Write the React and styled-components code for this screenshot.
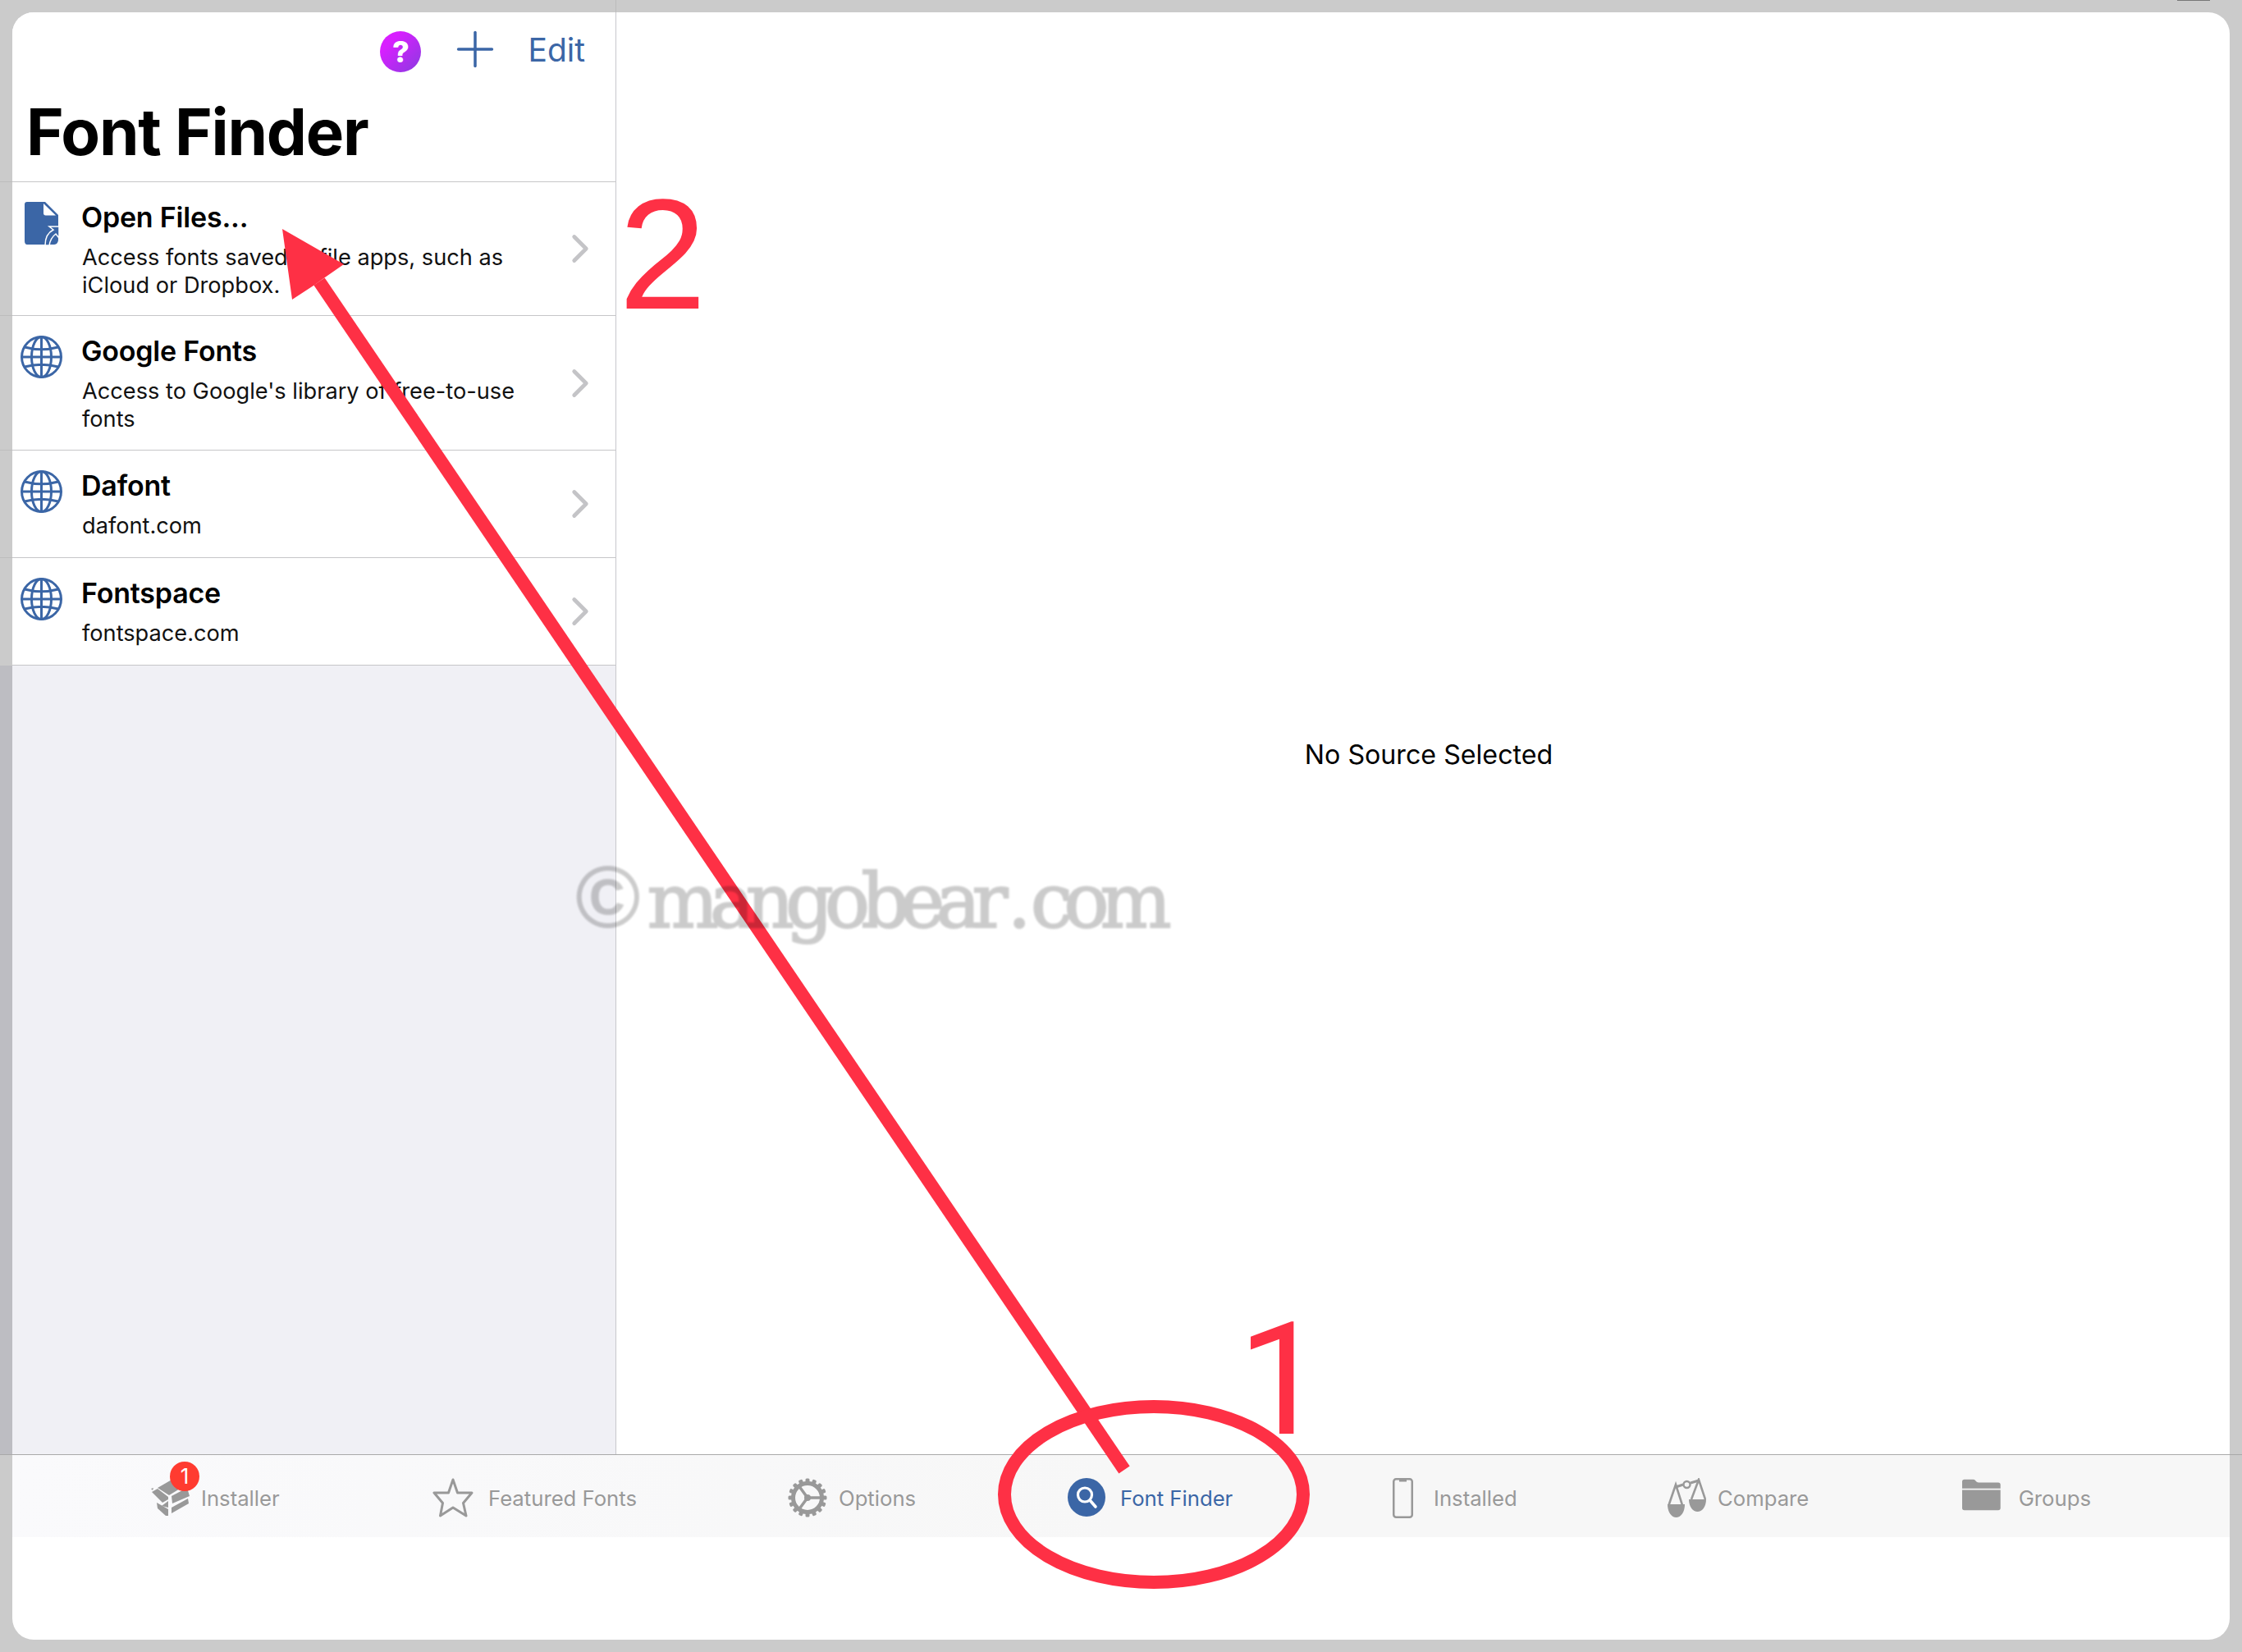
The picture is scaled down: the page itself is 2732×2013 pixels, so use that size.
import React from 'react';
import styled, { createGlobalStyle } from 'styled-components';
import { LuPlus, LuChevronRight } from 'react-icons/lu';

const BLUE = '#3b66a6';
const GREY = '#999999';
const RED = '#fe3045';

const GlobalStyle = createGlobalStyle`
    html, body {
        margin: 0;
        padding: 0;
        background: #cbcbcb;
        font-family: Inter, "Liberation Sans", sans-serif;
    }
`;

const Screen = styled.div`
    position: relative;
    width: 2732px;
    height: 2013px;
    box-sizing: border-box;
    padding: 15px 15px 15px 15px;
    overflow: hidden;
`;

const StatusMark = styled.div`
    position: absolute;
    top: 0;
    left: 2653px;
    width: 40px;
    height: 1px;
    background: #777;
`;

const Card = styled.div`
    display: flex;
    flex-direction: column;
    height: 100%;
    background: white;
    border-radius: 26px;
`;

const Split = styled.div`
    display: flex;
    height: 1757px;
`;

const Sidebar = styled.aside`
    position: relative;
    width: 735px;
    flex: none;
    display: flex;
    flex-direction: column;
    border-right: 1px solid #c8c8cc;
    background: #f0f0f5;
    border-top-left-radius: 26px;

    &::before {
        content: '';
        position: absolute;
        top: -15px;
        right: -1px;
        width: 1px;
        height: 15px;
        background: #bcbcbc;
    }
`;

const SidebarHeader = styled.header`
    height: 206px;
    box-sizing: border-box;
    background: white;
    border-top-left-radius: 26px;
    padding-top: 23px;
`;

const NavBar = styled.div`
    display: flex;
    justify-content: flex-end;
    align-items: center;
    height: 50px;
    padding-right: 37px;
`;

const HelpButton = styled.span`
    display: flex;
    align-items: center;
    justify-content: center;
    width: 50px;
    height: 50px;
    border-radius: 50%;
    background: linear-gradient(135deg, #d81fff 25%, #8a3be0 100%);
    color: white;
    font-weight: 800;
    font-size: 36px;
`;

const PlusButton = styled(LuPlus)`
    width: 70px;
    height: 70px;
    color: ${BLUE};
    stroke-width: 1.2;
    margin: -13px 29px -7px 31px;
`;

const EditButton = styled.span`
    font-size: 39px;
    color: ${BLUE};
    margin-top: -5px;
`;

const Title = styled.h1`
    margin: 31px 0 0 17px;
    font-size: 78px;
    line-height: 84px;
    font-weight: 700;
    letter-spacing: -1.2px;
    color: black;
`;

const Rows = styled.div`
    display: flex;
    flex-direction: column;
`;

const Row = styled.div`
    position: relative;
    display: flex;
    height: ${p => p.$height}px;
    box-sizing: border-box;
    padding: 0 34px 0 10px;
    background: white;
    border-top: 1px solid #c6c6c8;

    &:last-child {
        border-bottom: 1px solid #c6c6c8;
        height: ${p => p.$height + 1}px;
    }

    &::before {
        content: '';
        position: absolute;
        left: -15px;
        top: -1px;
        width: 15px;
        height: 1px;
        background: #bdbdbd;
    }
`;

const RowIcon = styled.div`
    width: 51px;
    flex: none;
    padding-top: ${p => p.$top}px;

    svg {
        display: block;
    }
`;

const RowText = styled.div`
    flex: 1;
    padding: 21px 0 0 23px;
`;

const RowTitle = styled.div`
    font-size: 34px;
    line-height: 44px;
    font-weight: 600;
    color: black;
    letter-spacing: -0.2px;
`;

const RowSub = styled.div`
    margin: 10px 0 0 1px;
    width: 530px;
    font-size: 27.2px;
    line-height: 34px;
    color: #111;
`;

const Chevron = styled(LuChevronRight)`
    align-self: center;
    flex: none;
    width: 58px;
    height: 58px;
    margin-right: -20px;
    color: #c4c4c7;
    stroke-width: 2;
`;

const SidebarFill = styled.div`
    position: relative;
    flex: 1;

    &::before {
        content: '';
        position: absolute;
        left: -15px;
        top: 0;
        bottom: 0;
        width: 15px;
        background: #bdbdc2;
    }
`;

const Detail = styled.main`
    flex: 1;
    display: flex;
    align-items: center;
    justify-content: center;
    padding: 52px 0 0 14px;
    font-size: 32.2px;
    color: black;
`;

const TabBar = styled.nav`
    position: relative;
    display: flex;
    align-items: flex-start;
    height: 101px;
    box-sizing: border-box;
    padding: 28px 0 0 169px;
    border-top: 1px solid #a9a9a9;
    margin-bottom: 125px;
    background: linear-gradient(90deg, #fafafc 0%, #f7f7f7 50%, #f7f7f7 100%);

    &::before {
        content: '';
        position: absolute;
        left: -15px;
        right: -15px;
        top: -1px;
        height: 1px;
        background: #a9a9a9;
    }
`;

const Tab = styled.div`
    position: relative;
    display: flex;
    flex: none;
    align-items: flex-start;
    width: ${p => p.$width}px;
    gap: ${p => p.$gap}px;
    color: ${p => (p.$active ? BLUE : GREY)};
`;

const TabLabel = styled.span`
    font-size: 25.7px;
    line-height: 30px;
    margin-top: 10px;
`;

const Badge = styled.span`
    position: absolute;
    left: 23px;
    top: -20px;
    width: 36px;
    height: 36px;
    border-radius: 50%;
    background: #ff3b30;
    color: white;
    font-size: 26px;
    line-height: 36px;
    text-align: center;
`;

const Overlay = styled.svg`
    position: absolute;
    inset: 0;
    pointer-events: none;
`;

const Numeral = styled.span`
    position: absolute;
    left: ${p => p.$x}px;
    top: ${p => p.$y}px;
    font-family: ${p => p.$font}, sans-serif;
    font-size: 192px;
    line-height: 192px;
    color: ${RED};
`;

const Watermark = styled.div`
    position: absolute;
    left: 701px;
    top: 1030px;
    display: flex;
    align-items: baseline;
    color: black;
    opacity: 0.2;
    filter: blur(0.8px);
    white-space: nowrap;
`;

const WatermarkMark = styled.span`
    font-family: "Liberation Sans", sans-serif;
    font-size: 108px;
    font-weight: 700;
    margin-right: 8px;
`;

const WatermarkText = styled.span`
    font-family: "DejaVu Serif", serif;
    font-size: 92px;
    letter-spacing: -11px;
    -webkit-text-stroke: 2px black;
`;

const WatermarkDot = styled.span`
    margin: 0 10px;
`;

const Globe = () => (
    <svg width="51" height="52" viewBox="0 0 51 52" fill="none" stroke={BLUE} strokeWidth="3">
        <ellipse cx="25.5" cy="26" rx="24" ry="24.5" />
        <ellipse cx="25.5" cy="26" rx="12" ry="24.5" />
        <path d="M25.5 1.5V50.5M1.5 26H49.5M5 14C18 17.5 33 17.5 46 14M5 38C18 34.5 33 34.5 46 38" />
    </svg>
);

const FileIcon = () => (
    <svg width="48" height="54" viewBox="0 0 48 54">
        <path d="M3 1H25L41 17V47C41 50 39 53 36 53H3C1 53 0 51 0 49V4C0 2 1 1 3 1Z" fill={BLUE} transform="translate(5 0)" />
        <path d="M29 3L44 17.5H31.5C30 17.5 29 16.5 29 15Z" fill="white" transform="translate(-1 0)" />
        <path d="M34 54C34 44 38 38 44 35L39 31L51 31L51 45L47 40C43 43 40 48 39 54Z" fill={BLUE} stroke="white" strokeWidth="1.5" transform="translate(-4 0)" />
    </svg>
);

const BoxIcon = () => (
    <svg width="47" height="46" viewBox="0 0 47 46" fill={GREY}>
        <path d="M8 12L27 1L40 10L22 21Z" />
        <path d="M0 13L3 12L2 15Z" />
        <path d="M1 17L8 13L21 23V26L14 30Z" />
        <path d="M25 22L44 12L47 22L26 31Z" />
        <path d="M7 30L21 38V46L18 46L8 37Z" />
        <path d="M25 36L45 25L46 31L25 43Z" />
        <path d="M13 34L21 28V36Z" />
    </svg>
);

const StarIcon = () => (
    <svg width="50" height="48" viewBox="0 0 50 48" fill="none" stroke={GREY} strokeWidth="3" strokeLinejoin="round">
        <path d="M25 2L30.5 18H48L37.5 30.5L41 46L25 36L9.5 46L12.5 30.5L2 18H19.5Z" />
    </svg>
);

const GearIcon = () => {
    const teeth = Array.from({ length: 16 }, (_, i) => i * 22.5);
    return (
        <svg width="48" height="48" viewBox="0 0 48 48" fill="none" stroke={GREY}>
            {teeth.map(a => (
                <rect key={a} x="21.5" y="0.5" width="5" height="6" rx="1.5" fill={GREY} stroke="none" transform={`rotate(${a} 24 24)`} />
            ))}
            <circle cx="24" cy="24" r="17.5" strokeWidth="5" />
            <path d="M24 24L13 9M24 24L13 39M24 24H42" strokeWidth="3.5" />
            <circle cx="24" cy="24" r="4" fill={GREY} stroke="none" />
        </svg>
    );
};

const SearchBadge = () => (
    <svg width="46" height="47" viewBox="0 0 46 47">
        <ellipse cx="23" cy="23.5" rx="23" ry="23.5" fill={BLUE} />
        <circle cx="21" cy="20.5" r="8.5" fill="none" stroke="white" strokeWidth="3.2" />
        <path d="M27 27L34 35" stroke="white" strokeWidth="3.6" strokeLinecap="round" />
    </svg>
);

const PhoneIcon = () => (
    <svg width="25" height="49" viewBox="0 0 25 49" fill="none" stroke={GREY}>
        <rect x="1.25" y="1.25" width="22.5" height="46.5" rx="3" strokeWidth="2.5" />
        <path d="M8 3H17" strokeWidth="3" />
    </svg>
);

const ScaleIcon = () => (
    <svg width="47" height="48" viewBox="0 0 47 48" fill="none" stroke={GREY} strokeWidth="2.6">
        <path d="M1.5 33L10 8L18 33" />
        <path d="M29 26L38 2L46 26" />
        <path d="M10 11L19 8M28 6L38 3" strokeWidth="3" />
        <circle cx="23.5" cy="8" r="4" strokeWidth="2.4" />
        <path d="M0 32H21C21 42 16 48 10.5 48C5 48 0 42 0 32Z" fill={GREY} stroke="none" />
        <path d="M26 26H47C47 35 42 41 36.5 41C31 41 26 35 26 26Z" fill={GREY} stroke="none" />
    </svg>
);

const FolderIcon = () => (
    <svg width="51" height="41" viewBox="0 0 51 41" fill={GREY}>
        <path d="M0 3C0 1 1 0 3 0H15C18 0 18 4 22 4H48C50 4 51 5 51 7V12H0Z" />
        <path d="M0 14H51V38C51 40 50 41 48 41H3C1 41 0 40 0 38Z" />
    </svg>
);

const sources = [
    { title: 'Open Files...', sub: 'Access fonts saved in file apps, such as iCloud or Dropbox.', icon: <FileIcon />, top: 23, height: 163 },
    { title: 'Google Fonts', sub: "Access to Google's library of free-to-use fonts", icon: <Globe />, top: 24, height: 164 },
    { title: 'Dafont', sub: 'dafont.com', icon: <Globe />, top: 24, height: 131 },
    { title: 'Fontspace', sub: 'fontspace.com', icon: <Globe />, top: 24, height: 131 },
];

const App = () => (
    <Screen>
        <GlobalStyle />
        <StatusMark />
        <Card>
            <Split>
                <Sidebar>
                    <SidebarHeader>
                        <NavBar>
                            <HelpButton>?</HelpButton>
                            <PlusButton />
                            <EditButton>Edit</EditButton>
                        </NavBar>
                        <Title>Font Finder</Title>
                    </SidebarHeader>
                    <Rows>
                        {sources.map(s => (
                            <Row key={s.title} $height={s.height}>
                                <RowIcon $top={s.top}>{s.icon}</RowIcon>
                                <RowText>
                                    <RowTitle>{s.title}</RowTitle>
                                    <RowSub>{s.sub}</RowSub>
                                </RowText>
                                <Chevron />
                            </Row>
                        ))}
                    </Rows>
                    <SidebarFill />
                </Sidebar>
                <Detail>No Source Selected</Detail>
            </Split>
            <TabBar>
                <Tab $width={343} $gap={14}>
                    <BoxIcon />
                    <Badge>1</Badge>
                    <TabLabel>Installer</TabLabel>
                </Tab>
                <Tab $width={433} $gap={18}>
                    <StarIcon />
                    <TabLabel>Featured Fonts</TabLabel>
                </Tab>
                <Tab $width={341} $gap={14}>
                    <GearIcon />
                    <TabLabel>Options</TabLabel>
                </Tab>
                <Tab $width={396} $gap={18} $active>
                    <SearchBadge />
                    <TabLabel>Font Finder</TabLabel>
                </Tab>
                <Tab $width={335} $gap={25}>
                    <PhoneIcon />
                    <TabLabel>Installed</TabLabel>
                </Tab>
                <Tab $width={359} $gap={14}>
                    <ScaleIcon />
                    <TabLabel>Compare</TabLabel>
                </Tab>
                <Tab $width={157} $gap={22}>
                    <FolderIcon />
                    <TabLabel>Groups</TabLabel>
                </Tab>
            </TabBar>
        </Card>

        <Overlay width="2732" height="2013" viewBox="0 0 2732 2013">
            <path d="M389 343L1370 1791" stroke={RED} strokeWidth="16" fill="none" />
            <path d="M344 279L419 322L396 338L382 348L356 365Z" fill={RED} />
            <ellipse cx="1406" cy="1821" rx="182" ry="107" stroke={RED} strokeWidth="16" fill="none" />
        </Overlay>
        <Numeral $font='"Liberation Sans"' $x={754} $y={214}>2</Numeral>
        <Numeral $font="Roboto" $x={1508} $y={1586}>1</Numeral>

        <Watermark>
            <WatermarkMark>©</WatermarkMark>
            <WatermarkText>mangobear<WatermarkDot>.</WatermarkDot>com</WatermarkText>
        </Watermark>
    </Screen>
);

export default App;
